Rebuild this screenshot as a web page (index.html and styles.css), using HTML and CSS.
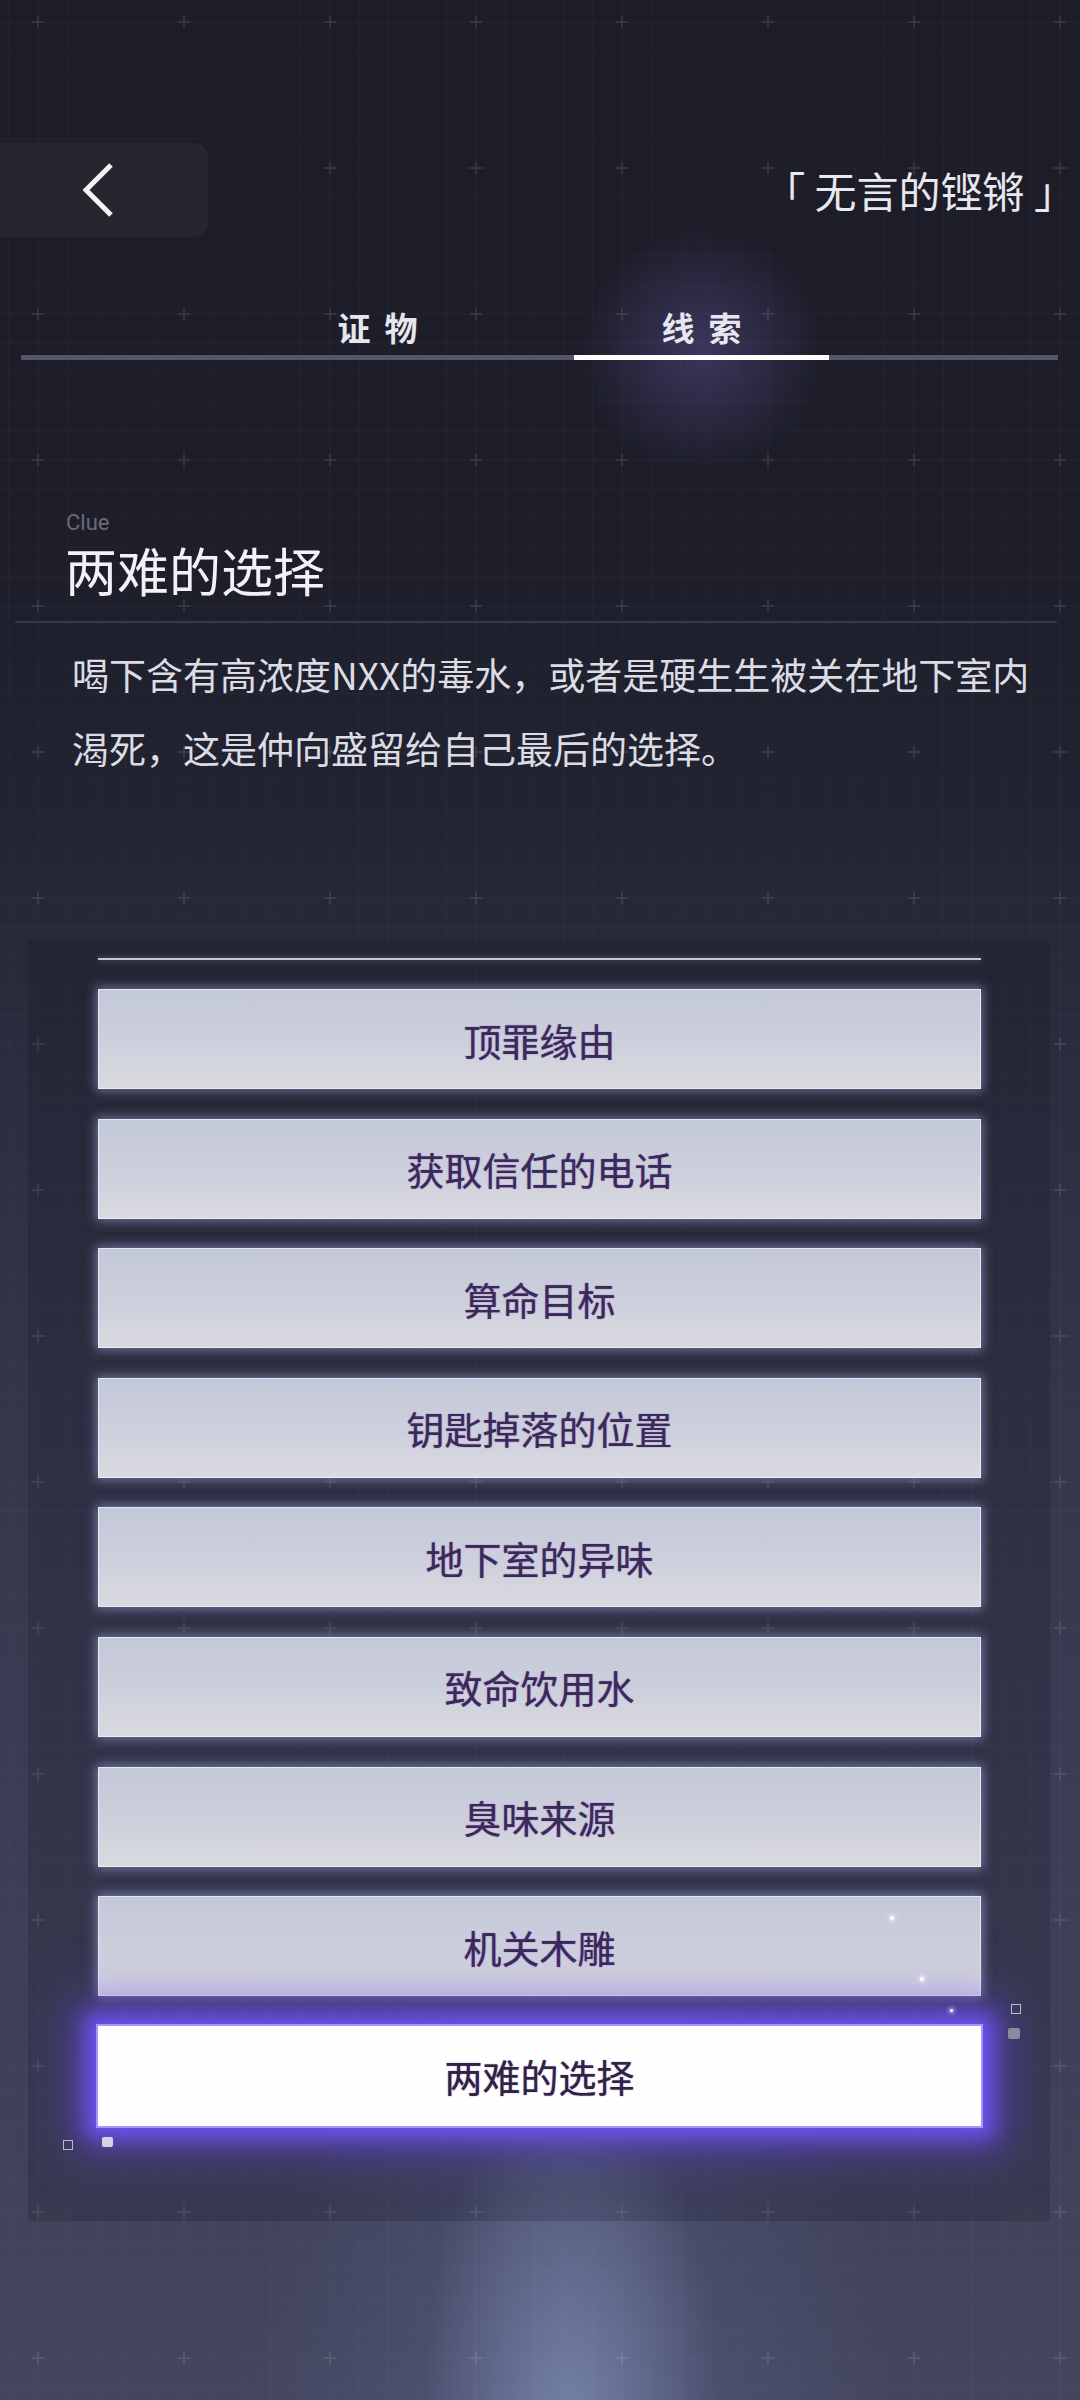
FILE: index.html
```html
<!DOCTYPE html>
<html>
<head>
  <meta charset="utf-8">
  <title>线索</title>
  <link rel="stylesheet" href="styles.css">
</head>
<body>

<svg class="grid" width="1080" height="2400">
  <defs>
    <pattern id="cells" x="-35" y="-51" width="146" height="146" patternUnits="userSpaceOnUse">
      <path d="M14.6 0V146M43.8 0V146M102.2 0V146M131.4 0V146M0 14.6H146M0 43.8H146M0 102.2H146M0 131.4H146" stroke="rgba(255,255,255,0.018)" stroke-width="1"/>
      <path d="M73 0V146M0 73H146" stroke="rgba(255,255,255,0.03)" stroke-width="1"/>
      <path d="M67 73H79M73 67V79" stroke="rgba(255,255,255,0.085)" stroke-width="2"/>
    </pattern>
  </defs>
  <rect width="1080" height="2400" fill="url(#cells)"/>
</svg>

<div class="page">
  <div class="topbar">
    <div class="back">
      <svg width="32" height="54" viewBox="0 0 32 54">
        <polyline points="29,2 4,27 29,52" fill="none" stroke="#f4f4f8" stroke-width="5"/>
      </svg>
    </div>
    <div class="case-title">「 无言的铿锵 」</div>
  </div>

  <div class="tabs">
    <div class="tab">证物</div>
    <div class="tab active">线索</div>
  </div>

  <div class="clue">
    <div class="clue-label">Clue</div>
    <h1 class="clue-title">两难的选择</h1>
  </div>
  <div class="divider"></div>
  <p class="clue-text">喝下含有高浓度NXX的毒水，或者是硬生生被关在地下室内渴死，这是仲向盛留给自己最后的选择。</p>

  <div class="panel">
    <div class="panel-line"></div>
    <div class="list">
      <div class="item">顶罪缘由</div>
      <div class="item">获取信任的电话</div>
      <div class="item">算命目标</div>
      <div class="item">钥匙掉落的位置</div>
      <div class="item">地下室的异味</div>
      <div class="item">致命饮用水</div>
      <div class="item">臭味来源</div>
      <div class="item">机关木雕</div>
      <div class="item selected">两难的选择</div>
    </div>

    <span class="spark s1"></span>
    <span class="spark s2"></span>
    <span class="spark s3"></span>
    <span class="sq-outline q1"></span>
    <span class="sq-fill f1"></span>
    <span class="sq-outline q2"></span>
    <span class="sq-fill f2"></span>
  </div>
</div>

</body>
</html>
```

FILE: styles.css
```css
body {
  margin: 0;
  width: 1080px;
  height: 2400px;
  overflow: hidden;
  position: relative;
  font-family: "Noto Sans CJK SC", "Noto Sans", sans-serif;
  color: #ececf2;
  background:
    radial-gradient(ellipse 150px 380px at 570px 2440px, rgba(130,145,185,0.75), rgba(130,145,185,0) 100%),
    radial-gradient(ellipse 330px 560px at 570px 2480px, rgba(95,105,150,0.5), rgba(95,105,150,0) 100%),
    linear-gradient(to bottom, #1c1d28 0, #1d1e2a 560px, #232433 820px, #2b2d3e 1050px, #34364b 1420px, #3d3f57 1900px, #44465e 2400px);
}

.grid {
  position: absolute;
  top: 0;
  left: 0;
}

.page {
  position: relative;
  padding-top: 143px;
}

/* header */
.topbar {
  height: 94px;
  display: flex;
  align-items: center;
  justify-content: space-between;
}
.back {
  width: 208px;
  height: 94px;
  box-sizing: border-box;
  padding-left: 82px;
  display: flex;
  align-items: center;
  background: #25262e;
  border-radius: 0 14px 14px 0;
}
.case-title {
  font-size: 42px;
  line-height: 1;
  padding-right: 4px;
  color: #e8e8ee;
}

/* tabs */
.tabs {
  margin: 70px 22px 0 21px;
  padding-left: 229px;
  display: flex;
  gap: 69px;
  border-bottom: 5px solid #54556a;
}
.tab {
  position: relative;
  width: 255px;
  height: 48px;
  font-size: 33px;
  line-height: 40px;
  font-weight: 700;
  letter-spacing: 14px;
  text-indent: 14px;
  text-align: center;
  color: #e6e6ee;
}
.tab.active {
  margin-bottom: -5px;
  border-bottom: 5px solid #ffffff;
}
.tab.active::before {
  content: "";
  position: absolute;
  left: 50%;
  top: 42px;
  width: 250px;
  height: 250px;
  transform: translate(-50%, -50%);
  background: radial-gradient(circle, rgba(120,100,195,0.34) 0, rgba(120,100,195,0.14) 40%, rgba(120,100,195,0) 68%);
  z-index: -1;
}

/* clue header */
.clue {
  margin: 149px 0 0 66px;
}
.clue-label {
  font-family: Roboto, "Noto Sans", sans-serif;
  font-size: 22px;
  line-height: 28px;
  color: #6a6b78;
}
.clue-title {
  margin: 2px 0 0 -1px;
  font-size: 52px;
  line-height: 62px;
  font-weight: 400;
  color: #f2f2f6;
}
.divider {
  margin: 20px 23px 0 15px;
  height: 2px;
  background: #373848;
}
.clue-text {
  margin: 14px 0 0 72px;
  width: 960px;
  font-size: 37px;
  line-height: 74px;
  color: #dcdce4;
}

/* list panel */
.panel {
  position: relative;
  margin: 156px 0 0 28px;
  width: 1022px;
  height: 1280px;
  box-sizing: border-box;
  padding: 17px 0 0 70px;
  background: rgba(12,12,24,0.17);
}
.panel-line {
  width: 883px;
  height: 2px;
  background: #c4c6d8;
  box-shadow: 0 0 6px rgba(190,195,230,0.5);
}
.list {
  margin-top: 29px;
  display: flex;
  flex-direction: column;
  gap: 29.6px;
}
.item {
  width: 883px;
  height: 100px;
  display: flex;
  align-items: center;
  justify-content: center;
  font-size: 38px;
  color: #3a2a5a;
  text-shadow: 0 0 1px rgba(120,60,160,0.7), 0 0 1px rgba(120,60,160,0.5);
  background: linear-gradient(to bottom, #c3c8d8 0, #cdd0dc 55%, #dadae0 100%);
  box-shadow: inset 0 0 0 1px rgba(240,242,252,0.75), 0 0 10px 2px rgba(175,185,240,0.5);
}
.item.selected {
  background: #fefeff;
  color: #2d2440;
  box-shadow: 0 0 0 2px #a892ff, 0 0 18px 12px rgba(112,82,240,0.95), 0 0 46px 26px rgba(98,70,225,0.6);
}

/* little decorations around the selected row */
.spark {
  position: absolute;
  width: 4px;
  height: 4px;
  border-radius: 50%;
  background: #ffffff;
  box-shadow: 0 0 4px 1px rgba(255,255,255,0.8);
}
.s1 { left: 862px; top: 975px; }
.s2 { left: 892px; top: 1036px; }
.s3 { left: 922px; top: 1068px; width: 3px; height: 3px; }
.sq-outline {
  position: absolute;
  width: 8px;
  height: 8px;
  border: 1.5px solid #b8b8c8;
}
.sq-fill {
  position: absolute;
  border-radius: 2px;
}
.q1 { left: 983px; top: 1063px; }
.f1 { left: 980px; top: 1087px; width: 12px; height: 11px; background: #8a8a9c; }
.q2 { left: 35px; top: 1199px; }
.f2 { left: 74px; top: 1196px; width: 11px; height: 10px; background: #d4d4e4; }
```
